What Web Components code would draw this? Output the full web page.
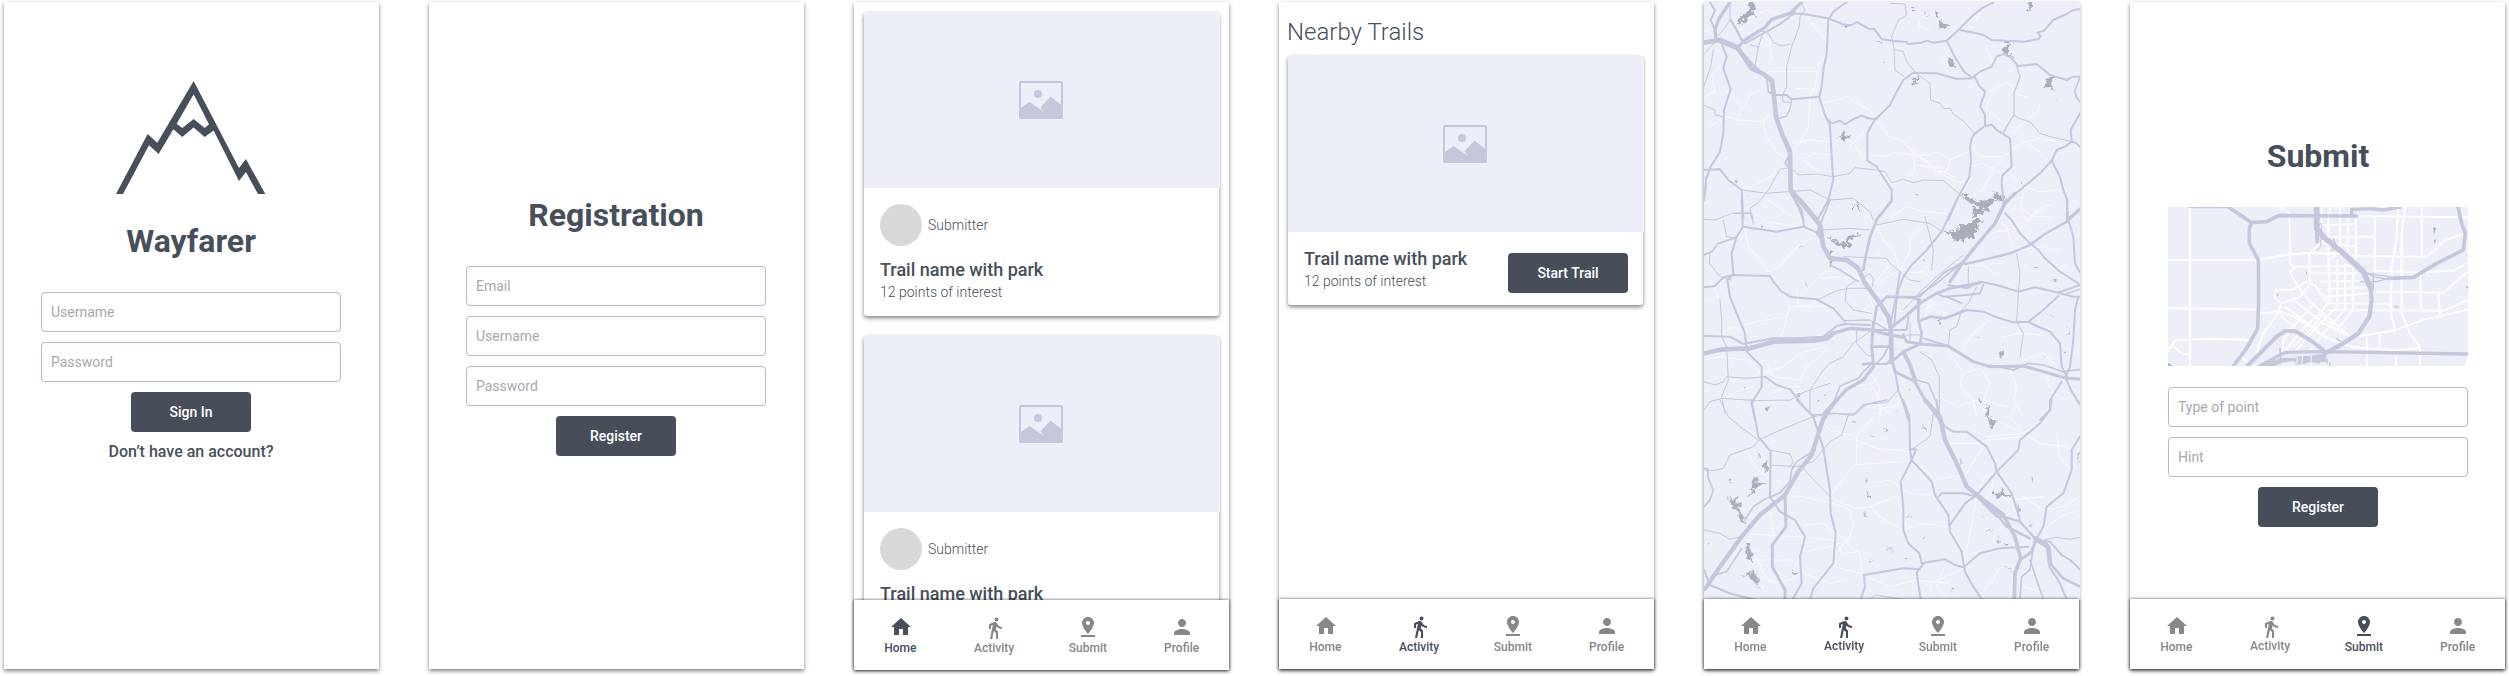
<!DOCTYPE html>
<html lang="en">
<head>
<meta charset="utf-8">
<title>Wayfarer</title>
<style>
body{margin:0;background:#fff;font-family:Roboto,"Liberation Sans",sans-serif;color:#474f5b;width:2509px;height:676px;overflow:hidden}
</style>
</head>
<body>
<wf-board>
  <wf-phone>
    <wf-form top="79" width="374">
      <wf-logo></wf-logo>
      <wf-title style="margin:28px 0 22px">Wayfarer</wf-title>
      <wf-field>Username</wf-field><wf-field>Password</wf-field>
      <wf-button>Sign In</wf-button>
      <wf-link>Don’t have an account?</wf-link>
    </wf-form>
  </wf-phone>
  <wf-phone>
    <wf-form top="194" width="374">
      <wf-title style="margin-bottom:22px">Registration</wf-title>
      <wf-field>Email</wf-field><wf-field>Username</wf-field><wf-field>Password</wf-field>
      <wf-button>Register</wf-button>
    </wf-form>
  </wf-phone>
  <wf-phone>
    <wf-feed>
      <wf-card submitter="Submitter" points="12 points of interest"></wf-card>
      <wf-card submitter="Submitter"></wf-card>
    </wf-feed>
    <wf-nav slot="nav" active="Home" style="margin-bottom:-1px"></wf-nav>
  </wf-phone>
  <wf-phone>
    <wf-nearby><span slot="title">Nearby Trails</span><wf-card action="Start Trail" points="12 points of interest"></wf-card></wf-nearby>
    <wf-nav slot="nav" active="Activity"></wf-nav>
  </wf-phone>
  <wf-phone>
    <wf-area-map></wf-area-map>
    <wf-nav slot="nav" active="Activity" raised></wf-nav>
  </wf-phone>
  <wf-phone style="margin-left:1px">
    <wf-form top="135" width="376">
      <wf-title style="margin-bottom:27px">Submit</wf-title>
      <wf-city-map></wf-city-map>
      <wf-field>Type of point</wf-field><wf-field>Hint</wf-field>
      <wf-button>Register</wf-button>
    </wf-form>
    <wf-nav slot="nav" active="Submit" raised></wf-nav>
  </wf-phone>
</wf-board>
<script>
const define = (name, render) => customElements.define(name, class extends HTMLElement {
  constructor() { super(); this.attachShadow({ mode: 'open' }); }
  connectedCallback() { this.shadowRoot.innerHTML = render(this); }
});

define('wf-board', () => `<style>:host{display:flex;gap:50px;padding:2px 4px;box-sizing:border-box;width:2509px;height:676px}</style><slot></slot>`);

define('wf-phone', () => `<style>
:host{display:flex;flex-direction:column;flex:none;width:375px;height:667px;background:#fff;box-shadow:0 2px 4px rgba(0,0,0,.5)}
.body{flex:1;min-height:0}
</style><div class="body"><slot></slot></div><slot name="nav"></slot>`);

define('wf-form', el => `<style>
:host{display:flex;flex-direction:column;align-items:center;gap:10px;width:${el.getAttribute('width')}px;padding-top:${el.getAttribute('top')}px}
::slotted(wf-title),::slotted(wf-logo){flex:none}
</style><slot></slot>`);

define('wf-logo', () => `<style>:host{display:block;height:113px;margin:0 1.4px -10px 0}svg{display:block}</style>
<svg width="149.3" height="113" viewBox="347 188 448 262" preserveAspectRatio="none" fill="#474f5b" fill-rule="evenodd"><path d="M347 450L442 311L471 331L580 188L716 390L737 369L795 450H773L737 399L716 420L640 303L613 318L580 296L546 318L519 300L475 357L446 337L368 450ZM580 219L529 287L546 297L580 276L613 297L626 288Z"/></svg>`);

define('wf-title', () => `<style>:host{display:block;font-size:32px;line-height:38px;font-weight:700;color:#474f5b}</style><slot></slot>`);

define('wf-field', () => `<style>:host{display:flex;align-items:center;box-sizing:border-box;width:300px;height:40px;padding:0 9px;border:1px solid #b1b7d9;border-radius:4px;font-size:14px;color:#a6a9ae;background:#fff}</style><slot></slot>`);

define('wf-button', () => `<style>:host{display:flex;align-items:center;justify-content:center;width:120px;height:40px;border-radius:4px;background:#474e5a;color:#fff;font-size:14px;font-weight:500}</style><slot></slot>`);

define('wf-link', () => `<style>:host{display:block;font-size:16px;font-weight:500;line-height:20px}</style><slot></slot>`);

define('wf-feed', () => `<style>:host{display:flex;flex-direction:column;gap:20px;padding:10px;height:598px;box-sizing:border-box;overflow:hidden}</style><slot></slot>`);

define('wf-nearby', () => `<style>:host{display:block;padding:0 11px 0 9px}
h2{margin:0 0 0 -1px;padding:16px 0 10px;font-size:24px;line-height:28px;font-weight:300}</style><h2><slot name="title"></slot></h2><slot></slot>`);

define('wf-card', el => {
  const who = el.getAttribute('submitter'), act = el.getAttribute('action'), points = el.getAttribute('points');
  return `<style>
:host{display:block;flex:none;width:355px;border-radius:3px;background:#fff;box-shadow:0 2px 4px rgba(0,0,0,.5)}
.img{width:356px;height:176px;background:#eceff8;border-radius:3px 3px 0 0;display:flex;align-items:center;justify-content:center}
.img svg{margin-right:2px}
.info{display:flex;justify-content:space-between;box-sizing:border-box;padding:${who ? '16px 16px 0;height:128px' : '16px 15px 0 16px;height:73px'}}
.who{display:flex;align-items:center;gap:6px;font-size:14px;font-weight:300;margin-bottom:13px}
.dot{width:42px;height:42px;border-radius:50%;background:#d8d8d8}
.name{font-size:18px;line-height:22px;font-weight:500}
.sub{font-size:14px;line-height:18px;font-weight:300;margin-top:2px}
.act{padding-top:5px}
</style>
<div class="img"><svg width="44" height="38" viewBox="0 0 44 38"><rect x="1" y="1" width="42" height="36" rx=".6" fill="none" stroke="#c5c7da" stroke-width="2"/><circle cx="19" cy="13" r="4" fill="#c5c7da"/><path fill="#c5c7da" d="M1 37V27.500L10.500 21L25 31L21.500 26.500L31.500 15.500L43 24.500V37Z"/></svg></div>
<div class="info"><div>${who ? `<div class="who"><div class="dot"></div><span>${who}</span></div>` : ''}<div class="name">Trail name with park</div>${points ? `<div class="sub">${points}</div>` : ''}</div>
${act ? `<div class="act"><wf-button>${act}</wf-button></div>` : ''}</div>`;
});

const icons = {
  Home: 'M10 20v-6h4v6h5v-8h3L12 3 2 12h3v8z',
  Activity: 'M13.5 5.500c1.100 0 2-.9 2-2s-.9-2-2-2-2 .9-2 2 .9 2 2 2zM9.800 8.900L7 23h2.100l1.800-8 2.100 2v6h2v-7.500l-2.100-2 .6-3C14.800 12 16.800 13 19 13v-2c-1.900 0-3.500-1-4.300-2.400l-1-1.600c-.4-.6-1-1-1.700-1-.3 0-.5.1-.8.1L6 8.300V13h2V9.600l1.800-.7',
  Submit: 'M18 8c0-3.310-2.690-6-6-6S6 4.690 6 8c0 4.500 6 11 6 11s6-6.500 6-11zm-8 0c0-1.100.9-2 2-2s2 .9 2 2-.89 2-2 2c-1.100 0-2-.9-2-2zM5 20v2h14v-2H5z',
  Profile: 'M12 12c2.210 0 4-1.790 4-4s-1.790-4-4-4-4 1.790-4 4 1.790 4 4 4zm0 2c-2.670 0-8 1.340-8 4v2h16v-2c0-2.660-5.330-4-8-4z'
};
define('wf-nav', el => `<style>
:host{display:grid;grid-template-columns:repeat(4,1fr);position:relative;flex:none;height:70px;background:#fff;box-shadow:0 0 3px rgba(0,0,0,.6),0 1px 3px rgba(0,0,0,.3)}
div{display:flex;flex-direction:column;align-items:center;padding-top:15px;font-size:12px;line-height:14px;font-weight:500;color:#878787}
div.on{color:#474f5b}
svg{display:block;fill:currentColor;margin-bottom:2px}
span{margin-right:1px}
.Activity svg{margin:1px 0 ${el.hasAttribute('raised') ? 0 : 1}px}
</style>` + Object.entries(icons).map(([n, d]) => `<div class="${n}${n === el.getAttribute('active') ? ' on' : ''}"><svg width="24" height="24" viewBox="0 0 24 24"><path d="${d}"/></svg><span>${n}</span></div>`).join(''));

// Each line of road data is "stroke-width x,y x,y ..."; sections are stacked by a vertical offset.
const roads = (text, color, dy = 0) => `<g transform="translate(0 ${dy})" fill="none" stroke="${color}" stroke-linejoin="round" stroke-linecap="round">` +
  text.trim().split('\n').map(l => { const [w, ...p] = l.trim().split(' '); return `<polyline stroke-width="${w}" points="${p.join(' ')}"/>`; }).join('') + '</g>';
const lakes = (text, dy = 0) => `<g transform="translate(0 ${dy})" fill="#a9adbc">` + text.trim().split('\n').map(l => `<polygon points="${l.trim()}"/>`).join('') + '</g>';

const whiteN = `
3 160,0 175,55 230,30 310,55
3 350,50 385,95 408,120
3 405,175 385,190 385,215 240,215
3 240,115 245,180 220,200
3 385,215 375,260 360,290 355,380 330,430 300,460
3 45,290 75,275 65,225 90,200
3 110,275 140,300 155,330 180,285 205,270
3 155,325 145,360 110,350 60,380
3 145,360 220,365 235,345
3 220,365 230,410 260,455 290,480
3 320,265 390,268
3 395,310 440,300 470,290 510,315 540,330 550,350
3 440,410 490,425 515,470 530,480
3 480,440 515,400 530,395
3 310,430 360,420 420,425
3 300,470 350,475 370,460 425,465
3 560,365 600,410 640,425 670,460 720,490 740,515 790,540 830,550
3 545,465 590,470 615,455 670,465 720,465 745,455 780,480 835,455
3 670,465 675,510 650,535
3 780,480 770,515 740,515
3 850,440 870,470 940,470 990,430 1050,415 1100,425
3 965,400 1010,360 1045,330 1050,310
3 1000,420 1040,450 1070,480
3 900,275 950,245 985,285 1010,290
3 895,300 890,330 920,350 940,370
3 870,580 900,530 915,500 940,475
3 960,520 1000,560 1050,575 1110,570
3 1000,580 990,620 1030,650 1090,650
3 340,480 390,520
3 165,570 240,530 280,500
3 235,600 290,640 330,655
3 600,655 650,620 700,635 770,640
3 890,150 910,185
3 870,40 850,80 830,90
3 685,55 690,80 720,90
3 770,215 760,180 790,160
3 195,95 225,110 240,130 215,140
3 655,440 690,470 725,500 750,500
3 680,495 740,505 800,535
3 840,500 880,490 930,520 950,540`;
const roadsN = `
14 42,128 90,120 140,140 185,205 220,222 246,242 252,290 258,350 275,400 300,455 302,570 335,608 380,660
5 165,165 190,195 225,225 232,245 235,275 252,285
10 78,115 75,90 85,60 120,6
6 60,6 75,32 62,60 75,90
10 90,125 140,145 165,120 225,82 245,58 300,40 335,6
6 165,130 220,100 270,72 310,42 320,20
7 122,60 140,90 158,125
3 120,15 120,60 100,90 85,105
6 95,130 110,170 100,205 122,268 102,330 100,400 90,455 62,500 48,540 42,600
6 470,6 430,35 415,60 410,160 400,210 395,260 388,292 405,345 420,375 425,470 430,540 415,600 385,655
6 300,40 340,42 415,55 465,75 485,75 500,66 540,88 552,86 575,117 605,122 650,126 655,132 695,128 710,122 730,128 770,122 800,95 850,45 880,22 910,8
6 810,90 860,100 880,105 905,120 1000,125 1045,118 1052,108 1042,98 1062,92 1090,60 1130,42 1150,30 1170,28
6 770,122 795,172 822,215 845,232
6 555,360 600,315 620,275 640,240 670,218 740,220 800,237 845,235 870,215 905,200 920,170 940,162 962,172 985,198 1040,192 1080,225 1130,240 1150,230 1170,230
6 855,232 868,258 886,275 870,318 885,345 885,378 855,400 845,415 840,440 843,480 838,530 800,600 775,660
6 885,378 905,374 920,390 960,415 965,500 938,525 935,545 940,610
6 252,285 290,285 305,298 388,290
4 305,298 302,320 290,348 268,355
3 278,285 278,305 300,308
6 415,360 425,370 450,362 465,373 485,360 515,346 535,355 555,358 532,400 532,482 560,500 605,570 605,605 562,655
3 70,150 62,200 42,258
3 45,160 75,125
6 1170,340 1142,390 1145,425 1125,440 1100,450 1085,482 1050,520 990,570 945,605 920,660
10 975,580 945,610 920,660
6 1085,482 1110,530 1120,570 1132,600 1130,660 1170,625
6 1145,425 1160,430 1170,440
5 1170,232 1155,270 1158,290 1170,305
3 200,90 235,100 250,128 275,138 300,132
3 335,10 345,30 330,50 328,80 305,140 290,200 290,260 278,285
3 222,90 205,140 195,200
3 180,135 205,140
3 310,510 325,525 380,522 430,530 480,520 495,503 560,510 585,515 605,548 640,538 670,548 700,540 760,542 800,575 840,610
3 155,570 230,580 360,570 420,600 490,595 540,635 550,660
3 42,315 75,330 75,345 100,350
6 42,510 90,508 115,540 155,570 160,655
6 300,575 325,620 340,660
5 295,470 285,490 300,505
3 600,10 645,12 650,45 625,60 605,110 612,148 640,155 650,185 680,222 720,250 722,300 750,310 760,325 780,325 790,342 820,362 850,398
3 612,150 615,210 640,228
4 978,190 990,230 972,280 972,345 950,380 940,400
3 972,345 985,355 1020,365 1050,400 1080,410 1145,425
3 300,503 270,508 235,570 205,608 180,625 185,655
3 42,590 50,560 45,530
3 130,640 180,640 190,655`;
const lakesN = `
172,6 194,6 190,40 196,50 182,44 164,66 138,72 158,55 165,40 178,32
725,22 735,40 745,36 742,48 734,44
748,54 756,66 772,74 795,76 770,80 745,86 752,68
660,22 686,22 668,28
700,38 722,48 708,44
942,130 972,126 956,138 952,155 966,162 970,176 952,164 940,163
664,236 688,228 684,240 676,238 678,250 664,254 674,244
435,412 456,414 458,392 466,402 480,406 472,416 464,418 460,425 450,416
1015,10 1028,8 1020,28 1026,40 1014,26
770,175 786,180 800,205 788,198 782,206 776,190
1070,234 1092,230 1084,250 1092,280 1080,262 1066,262
460,78 474,74 464,86
560,120 580,126 570,128
812,585 838,577 834,590 850,600 885,614 898,592 916,602 894,628 878,636 866,648 848,652 858,630 872,622 832,604
908,574 926,587 942,588 938,602 918,598
978,547 992,550 982,553
1100,292 1108,308 1098,296
678,580 688,582 680,588
172,584 182,588 176,590
485,620 492,615 490,632
500,612 508,618 504,632
582,178 586,186 582,188
135,540 145,546 138,550`;
const whiteM = `
3 165,90 175,140 215,185 235,215 270,200 300,160 370,110
3 190,40 230,65 320,80
3 350,270 380,235 430,200
3 320,260 325,320 380,310
3 240,235 275,270 300,320 280,395 260,420
3 155,375 200,365 290,350 300,320 430,320
3 95,400 130,380 150,395
3 60,240 85,290 45,300
3 390,235 440,230 500,235 560,250 620,215
3 470,205 500,230 560,245 600,190 560,160
3 560,75 580,120 610,150 630,210
3 630,215 660,150 660,110 700,80
3 640,220 700,215 730,240 760,215
3 530,270 545,310 520,330 560,345 530,370
3 520,280 560,275 570,290
3 430,330 470,370 500,420 540,430
3 620,330 650,345 655,390 700,370 720,300
3 660,395 650,420 690,430
3 700,300 740,330 770,340
3 700,330 740,310 690,280
3 780,170 820,200 880,195 920,225
3 900,100 950,90 1000,80 1040,30
3 965,130 950,80 920,60 960,10
3 1000,150 1050,140 1110,150
3 1060,170 1100,210 1140,190
3 820,440 860,390 900,360
3 780,460 820,520 870,505
3 820,520 810,560 850,600 860,650
3 870,500 900,550 880,600 950,620
3 960,510 980,560 970,600 1000,650
3 1070,530 1090,580 1130,600
3 1100,500 1060,460 1000,480
3 750,590 800,620 860,600
3 45,480 90,470 160,480
3 230,490 250,530 330,540 350,500 410,450
3 180,480 210,520 280,500 330,460 400,440
3 500,560 540,550 570,600 570,650
3 540,520 570,560 560,610 600,640
3 640,580 620,620 560,625
3 100,600 150,570 190,560
3 245,580 300,560 330,560
3 940,410 990,400 1050,405
3 870,160 900,190 940,190
3 985,50 1020,60 1060,20 1100,10`;
const roadsM = `
14 330,0 390,75 400,140 420,175 470,180 505,205 525,250 570,310 595,350 602,380 605,475
9 605,475 615,515 675,545 705,600 750,660
6 420,0 390,75 380,100 400,125
6 315,0 335,30 342,80
6 155,0 158,80 260,95 340,80 375,95 390,100
6 158,82 140,110 125,160 130,222 112,240 120,290 140,340 165,400 170,455 215,500 215,560 185,610 195,660
5 42,165 65,155 85,130 140,112
3 60,160 58,190 90,230 125,240
6 42,262 75,258 100,232 130,225 240,228 250,245 275,275 305,292 380,298 430,325 465,365
5 420,195 450,210 505,245
4 465,362 540,360 590,388 650,390
14 42,460 100,448 180,445 250,425 370,422 410,415 430,400
10 430,400 480,385 545,390 580,400 640,412
9 640,405 650,425 690,432 775,438 850,485 900,500 1000,498 1060,515 1130,535 1170,537
6 700,415 775,438
5 900,495 970,510 1015,490 1060,495 1120,515 1170,508
6 42,408 120,410 160,432 250,415 320,415 400,410 440,378 465,372 540,375
8 605,0 560,60 540,110 525,180 520,210
6 800,0 755,95 710,150 665,195 640,230 625,270 620,300 612,380
10 950,0 915,70 860,135 820,185 780,245
9 870,248 780,265 740,280 690,310 640,355 605,380
5 680,290 740,250 820,185 760,220 690,290 660,290
3 820,165 740,230 690,275 660,310 640,330
7 825,192 870,182 960,160 1020,135 1060,105 1130,65 1170,30
6 945,40 965,60 990,100 1020,130 1045,150 1065,175 1110,215 1165,250
6 1130,0 1135,60 1150,110 1155,190 1170,218
8 550,380 560,320 590,290 665,292 690,300
9 550,370 545,440 550,490 520,493
6 775,255 830,265 870,245 920,255 985,275 1035,262 1105,278 1150,290 1170,290
6 1105,278 1170,255
4 1130,280 1170,268
6 1165,290 1155,330 1150,420 1140,500 1125,535
8 690,362 720,350 765,355 830,330
6 830,330 880,335 920,352 970,367 1015,365 1060,330 1105,288
6 1015,365 1040,378 1080,395 1110,430 1115,500 1130,530
8 685,300 685,360 695,400 690,432 640,455 600,490
6 550,492 590,492 605,475
8 545,440 605,440 600,400
6 540,390 650,390 655,350
3 650,405 690,405
3 660,370 660,430
10 550,500 520,540 470,568 430,612 400,660
5 545,492 520,515 505,535 450,558 430,610
12 640,455 660,495 675,540
4 680,540 715,550 745,620 745,650
5 600,430 580,470 555,495
6 615,515 625,570 640,610 655,660
3 370,650 430,640 500,642 530,612 590,608 625,570
6 225,530 260,555 300,568 345,625 370,650
3 42,545 75,555 100,545 110,530 170,535 225,530
3 42,630 60,605 95,595 200,602 300,600 345,575 420,550
3 42,58 75,60 125,40 185,38 190,75
3 100,60 110,110 140,115
6 1115,545 1080,600 1080,630 1050,660
6 1130,540 1145,575 1170,612
3 690,455 725,480 748,530 748,640
3 460,170 590,175 600,190 630,215 660,240 690,245
3 385,298 440,272 480,265 530,265
3 500,240 470,260 465,300 490,330 545,340
3 360,640 360,570 400,510 420,490 460,470 490,430 540,395
3 560,75 640,58 720,70 755,95
3 980,160 990,220 985,280 980,365 1000,400 990,470
3 705,50 730,150 725,210
3 860,260 835,310 815,330 800,380 780,390 775,435
3 835,200 835,260
3 500,390 500,430 530,465 550,470
3 90,300 95,360 95,410 110,440 115,540 95,590 105,640
6 770,290 815,310
6 880,255 870,280 830,285 760,290 740,280
5 630,215 620,280 600,380
3 390,90 480,85 540,90
3 520,230 540,222 550,235 548,260 530,270`;
const lakesM = `
762,96 790,92 792,84 806,86 812,70 826,78 845,66 850,60 882,58 862,72 872,80 850,88 864,96 844,102 850,114 828,112 822,126 808,118 802,128 796,118 786,124 792,112 784,108
838,2 880,0 898,8 888,22 874,28 870,40 848,46 856,34 850,28 868,20
412,110 422,104 420,118 440,122 458,128 470,135 466,114 490,106 508,97 500,110 480,118 480,140 458,140 440,132
418,147 428,152 422,165 428,190 420,198 418,180
485,20 492,12 492,30
500,12 508,14 504,32
325,145 338,136 330,145
348,245 350,258 346,255
858,402 868,412 862,410
925,455 935,460 945,448 938,470 932,472
1085,240 1102,240 1095,243
1025,200 1050,203 1035,205
1065,335 1095,358 1080,348
1130,378 1140,412 1134,400
1118,445 1135,460 1125,455
745,360 758,362 750,370
655,565 664,565 660,572
220,625 244,618 235,635 226,632
380,600 395,598 386,606
400,585 415,588 408,592
165,550 168,560 162,575
863,592 874,606 870,608
695,178 706,178 700,184
210,78 216,78 214,88
320,585 338,580 328,588
890,610 898,640 895,660 888,645
1060,470 1068,478 1062,476`;
const whiteS = `
3 380,50 420,90 500,110 560,40 590,20
3 500,110 500,190 455,240 420,290
3 500,120 560,145 660,155
3 420,290 460,310 500,325 540,320 620,290 650,380
3 500,195 560,190 640,185
3 285,285 340,290 380,300 430,310 480,330 490,380 470,430 510,460 515,520 430,500
3 345,375 400,370 425,390 470,420 440,460
3 160,400 230,405 320,410 430,420 460,460 500,455
3 345,455 420,440 460,425
3 540,320 570,350 640,390 700,370 770,380
3 540,250 600,240 660,280 720,285 740,290
3 170,150 195,200 240,240
3 190,450 220,520 250,550 300,540 330,520
3 250,400 240,340 270,330
3 210,570 240,540 290,550
3 190,480 300,480 330,500
3 530,530 600,560 680,540 780,550
3 720,598 725,550 820,505
3 760,510 740,560 770,598
3 920,215 880,235 860,290 840,400 820,500
3 670,180 740,240 830,220 860,170 900,110
3 860,0 900,50 1000,100 1050,130 1130,140
3 850,90 890,110 1000,100 1050,60
3 770,130 860,130 900,120 990,110
3 990,0 960,50 1000,100 1070,60
3 1000,290 1060,330 1120,320 1170,290
3 1060,390 1110,350 1170,330
3 910,240 900,280 960,300 1060,290
3 1100,100 1110,170 1150,220
3 340,520 420,550 470,540
3 930,500 910,540 880,570
3 1000,560 1050,575`;
const roadsS = `
13 440,0 405,40 385,100 365,165 325,215 285,285 210,345 155,410 90,500 50,560 42,568
6 320,0 370,50 400,145 420,270 422,340 437,400 430,490 370,565 360,598
6 185,0 205,110 242,155 240,290 270,335 315,360 345,410 330,470 335,550 308,598
9 285,285 288,380 247,435 247,500 285,570 285,598
6 640,0 658,50 660,150 665,180 632,245 640,320 640,390 655,430 688,460 695,490 765,478 795,495 820,502
6 660,148 678,148 665,180
6 665,180 725,245 735,285 775,345 780,395 815,455 825,515 850,560 875,598
6 822,500 870,460 930,445 1015,440
6 700,492 680,518 692,598
6 512,598 525,560 522,525 640,505 690,508
13 705,0 750,50 765,120 800,190 830,260 880,300 940,345
11 940,345 975,410 992,475 975,520 973,598
7 940,350 990,365 1040,420
14 1035,415 1075,440 1080,490
8 1080,490 1120,535 1170,560
6 1085,0 1080,30 1050,70 990,120 985,150 920,215 895,245 860,285 825,310 780,375
6 740,0 745,50 765,80 790,95 830,95 890,140 915,190 920,215 965,280 990,360
6 745,290 755,280 820,280 860,290 920,350 940,350
7 860,290 910,330 950,380 1020,415
6 1170,110 1145,150 1145,210 1120,280 1070,320 1060,380 1035,425
9 1035,425 1025,455 990,480
5 1030,440 1020,510 995,530 990,598
5 1020,480 1060,598
6 1070,430 1078,500 1110,550 1130,598
6 1050,422 1080,425 1115,465 1140,480 1170,508
3 1040,425 1100,412 1140,418 1170,412
6 42,510 60,555 120,580 150,588 190,598
3 42,390 90,400 120,418 155,410
3 42,210 70,212 100,205 120,165 190,140 210,118 260,95 320,70 370,50
4 370,45 430,40 490,45 520,15 590,0
3 240,150 300,162 310,185 300,200
3 240,195 320,200 370,185 420,125 455,105 475,45
3 340,205 380,250 422,290
3 90,0 115,50 150,80 205,120
5 42,205 52,205 55,235 70,270 60,300 42,320
5 375,150 320,185 305,210 300,245 270,278 220,300 190,320 165,360
5 75,525 110,515 155,445
3 730,40 720,110 670,145
3 540,598 555,585 640,598
5 1160,0 1170,15`;
const lakesS = `
112,292 130,302 135,290 143,310 156,306 148,325 158,350 166,365 148,370 150,345 128,325
176,280 186,270 190,238 204,232 202,248 226,246 204,262 190,274 174,290
196,150 215,180 212,168
217,195 230,182 236,180 228,220 222,210
165,420 182,450 190,490 170,470
152,528 180,520 190,502 198,525 204,535 202,550 216,580 196,545 176,528
225,20 244,18 230,38
885,50 900,62 908,42 910,65 924,60 905,86 897,72
910,278 930,280 935,264 942,278 962,287 963,294 920,288
480,60 496,66 494,72
695,70 710,92 705,94
804,175 818,188 812,190
650,355 662,338 656,352
525,270 542,290 535,292
526,238 532,240 530,250
584,82 592,92 586,98
538,96 546,106 542,108
1020,365 1030,378 1022,384
920,412 934,425 924,428
938,430 960,435 948,440
930,490 972,516 950,505
592,428 608,462 600,450
536,484 552,480 540,487
640,478 665,478 650,481
695,418 708,412 700,420
306,520 330,518 312,526
228,550 240,542 232,552
875,335 890,375 880,350
892,388 906,392 898,393
785,566 796,566 788,572
522,338 532,345 526,348
50,428 60,434 56,438
118,240 124,240 122,248
1164,160 1170,150 1170,190
984,302 988,340 982,330
1028,232 1034,250 1026,240
616,32 624,28 620,34`;
define('wf-area-map', () => `<style>:host{display:block;width:376px;height:598px;background:#eceff8}svg{display:block}</style>
<svg width="376" height="598" viewBox="42 6 1128 1794">
<filter id="shore" x="0" y="0" width="1" height="1"><feTurbulence type="fractalNoise" baseFrequency=".07" numOctaves="2" seed="4"/><feDisplacementMap in="SourceGraphic" scale="26" xChannelSelector="R" yChannelSelector="G"/></filter>
${roads(whiteN, '#f9fafd')}${roads(whiteM, '#f9fafd', 600)}${roads(whiteS, '#f9fafd', 1200)}
<g filter="url(#shore)">${lakes(lakesN)}${lakes(lakesM, 600)}${lakes(lakesS, 1200)}</g>
${roads(roadsN, '#c5c7dc')}${roads(roadsM, '#c5c7dc', 600)}${roads(roadsS, '#c5c7dc', 1200)}</svg>`);

const streets = `
6 240,321 240,798
6 174,480 440,480 530,465 600,458 690,462 740,468 950,470 985,440 1005,420 1060,402
6 174,625 440,628
6 450,640 510,635 550,650 600,680 640,708 680,725 730,742 850,750 930,745
6 174,755 195,720 300,716 420,720
5 174,745 190,740 215,760 236,762
5 510,321 538,340 540,490 555,505 540,515 560,555 600,605 720,710
5 555,500 740,498
5 598,460 600,550 570,590 515,610 500,645 460,700 440,760
5 495,570 545,570 590,545 615,555 640,590 655,610 845,612
5 495,570 495,595 515,610
5 600,520 740,520
5 630,545 750,543
5 650,568 770,562
5 650,590 780,580
5 655,630 1000,632 1075,600
5 545,595 640,670 720,710
5 525,620 620,690 650,715
5 500,635 560,690
6 655,345 655,480 660,600 630,640 575,690 520,760
5 682,480 682,620 620,680 560,750
5 705,490 705,630 650,690 600,750
5 728,500 728,632 680,690
5 610,610 560,670 520,720 515,780
5 640,640 600,690 550,740
5 635,321 635,380
5 660,321 658,345
5 690,321 690,440
5 715,345 712,465
5 738,345 738,480
6 740,348 1074,352
5 640,375 738,372
5 650,412 795,410
5 640,430 740,440
5 795,350 795,510
6 865,321 858,430 845,500 843,640 855,690
6 885,321 875,400 875,640 900,700 930,740 930,798
5 935,321 935,468
5 790,512 920,518 1030,512 1074,488
5 800,575 1000,578 1074,515
5 932,520 932,632
5 985,580 990,640
5 740,710 850,692 940,660 1074,628
5 770,710 772,798
5 810,705 808,750
5 858,760 858,798
5 1070,760 1070,798
4 660,480 680,460
4 600,460 640,420
5 390,765 415,790
5 640,650 690,700`;
const highways = `
7 240,321 355,321
11 355,321 425,368 470,365 505,347 740,348
11 425,368 418,385 418,430 445,480 446,600 443,685 410,745 370,798
17 620,321 620,385 640,410 700,460 760,515 780,560
13 780,550 785,600 778,650 745,700 700,730 645,760
12 620,380 622,425
10 725,345 725,328 780,326 820,330 870,321
11 1044,321 1055,370 1066,400 1060,450 980,490 910,532 835,535
4 740,500 790,530 835,538
4 770,520 835,530
4 750,545 800,545 835,535
4 790,520 790,570
12 412,798 500,710 525,693 555,693 600,720 640,750
10 450,798 525,757 640,755 1074,762
16 470,798 520,780 600,775 640,770
9 560,790 650,780 660,798
5 640,760 625,790
5 510,745 512,775
4 690,725 680,715
4 670,415 680,445 665,450
3 625,375 635,370 632,440 622,450`;
define('wf-city-map', () => `<style>:host{display:block;width:300px;height:159px;background:#eceff8;margin:-5px 0 11px}svg{display:block}</style>
<svg width="300" height="159" viewBox="174 321 900 477">${roads(streets, '#fff')}${roads(highways, '#c5c7dc')}
${roads(`4 515,772 560,772
4 515,790 550,785
4 560,790 562,775
4 575,798 578,765
4 590,790 610,788
4 602,798 604,765
4 655,770 655,798`, '#eceff8')}
${lakes(`970,382 978,384 972,404
972,420 978,418 974,434
500,580 506,584 502,588
588,514 592,520 588,524
1066,558 1074,560 1072,568
174,788 188,798 174,798
852,619 866,619 866,622 852,622`)}</svg>`);
</script>
</body>
</html>
